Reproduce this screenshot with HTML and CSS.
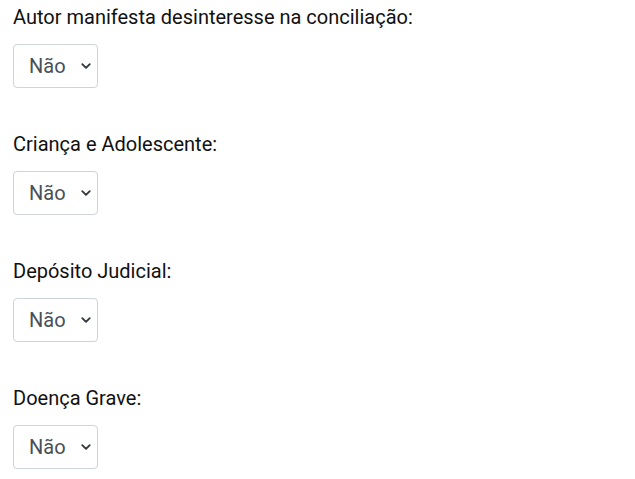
FILE: index.html
```html
<!DOCTYPE html>
<html lang="pt">
<head>
<meta charset="utf-8">
<link rel="stylesheet" href="styles.css">
</head>
<body>
<div class="form">
  <div class="field">
    <label class="label">Autor manifesta desinteresse na conciliação:</label>
    <select class="select"><option>Não</option><option>Sim</option></select>
  </div>
  <div class="field">
    <label class="label">Criança e Adolescente:</label>
    <select class="select"><option>Não</option><option>Sim</option></select>
  </div>
  <div class="field">
    <label class="label">Depósito Judicial:</label>
    <select class="select"><option>Não</option><option>Sim</option></select>
  </div>
  <div class="field">
    <label class="label">Doença Grave:</label>
    <select class="select"><option>Não</option><option>Sim</option></select>
  </div>
</div>
</body>
</html>
```

FILE: styles.css
```css
html, body {
  margin: 0;
  padding: 0;
  background: #fff;
}
body {
  font-family: Roboto, "Liberation Sans", sans-serif;
  color: #212529;
}
.form {
  display: flex;
  flex-direction: column;
  gap: 41px;
  padding: 2px 13px 0 13px;
}
.field {
  display: flex;
  flex-direction: column;
  align-items: flex-start;
  gap: 12px;
}
.label {
  font-size: 20px;
  line-height: 30px;
  color: #111;
}
.select {
  -webkit-appearance: none;
  appearance: none;
  box-sizing: border-box;
  width: 85px;
  height: 44px;
  margin: 0;
  padding: 0 30px 0 15px;
  font-family: Roboto, "Liberation Sans", sans-serif;
  font-size: 20px;
  color: #495057;
  background-color: #fff;
  background-image: url("data:image/svg+xml,%3csvg xmlns='http://www.w3.org/2000/svg' viewBox='0 0 16 16'%3e%3cpath fill='none' stroke='%23343a40' stroke-linecap='round' stroke-linejoin='round' stroke-width='2.5' d='M3 5.5l5 5 5-5'/%3e%3c/svg%3e");
  background-repeat: no-repeat;
  background-position: right 5px center;
  background-size: 12px 12px;
  border: 1px solid #ced4da;
  border-radius: 4px;
}
```
